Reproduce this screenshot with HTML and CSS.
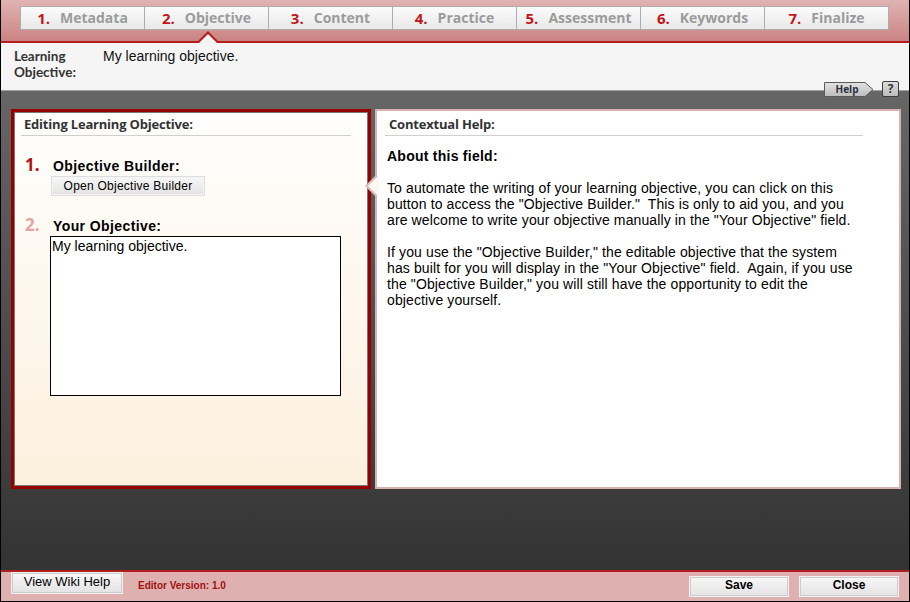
FILE: index.html
```html
<!DOCTYPE html>
<html>
<head>
<meta charset="utf-8">
<title>Objective Editor</title>
<link rel="stylesheet" href="styles.css">
</head>
<body>
<div class="app">
  <header class="topbar">
    <nav class="tabs">
      <div class="tab"><span class="tab-num">1.</span><span class="tab-lbl">Metadata</span></div>
      <div class="tab"><span class="tab-num">2.</span><span class="tab-lbl">Objective</span></div>
      <div class="tab"><span class="tab-num">3.</span><span class="tab-lbl">Content</span></div>
      <div class="tab"><span class="tab-num">4.</span><span class="tab-lbl">Practice</span></div>
      <div class="tab"><span class="tab-num">5.</span><span class="tab-lbl">Assessment</span></div>
      <div class="tab"><span class="tab-num">6.</span><span class="tab-lbl">Keywords</span></div>
      <div class="tab"><span class="tab-num">7.</span><span class="tab-lbl">Finalize</span></div>
    </nav>
  </header>
  <div class="caret caret-outer"></div>
  <div class="caret caret-inner"></div>

  <section class="objective-bar">
    <div class="ob-label">Learning<br>Objective:</div>
    <div class="ob-text">My learning objective.</div>
    <div class="help">
      <svg class="help-tab" width="50" height="15" viewBox="0 0 50 15">
        <defs>
          <linearGradient id="hg" x1="0" y1="0" x2="0" y2="1">
            <stop offset="0" stop-color="#e2e2e2"/>
            <stop offset="1" stop-color="#bcbcbc"/>
          </linearGradient>
        </defs>
        <polygon points="0.5,0.5 41,0.5 49,7.5 41,14.5 0.5,14.5" fill="url(#hg)" stroke="#5a5a5a"/>
        <text x="23" y="11" text-anchor="middle" class="help-txt">Help</text>
      </svg>
      <span class="help-q">?</span>
    </div>
  </section>

  <main class="workspace">
    <section class="panel-edit">
      <h2 class="panel-title edit-title">Editing Learning Objective:</h2>
      <div class="step step-1">
        <div class="step-head"><span class="step-num num-1">1.</span><span class="step-label">Objective Builder:</span></div>
        <button class="btn btn-builder">Open Objective Builder</button>
      </div>
      <div class="step step-2">
        <div class="step-head"><span class="step-num num-2">2.</span><span class="step-label">Your Objective:</span></div>
        <textarea class="objective-input">My learning objective.</textarea>
      </div>
    </section>

    <section class="panel-help">
      <div class="callout callout-outer"></div>
      <div class="callout callout-inner"></div>
      <h2 class="panel-title help-title">Contextual Help:</h2>
      <div class="help-body">
        <p class="help-head">About this field:</p>
        <p class="help-para">To automate the writing of your learning objective, you can click on this button to access the "Objective Builder."&nbsp; This is only to aid you, and you are welcome to write your objective manually in the "Your Objective" field.</p>
        <p class="help-para">If you use the "Objective Builder," the editable objective that the system has built for you will display in the "Your Objective" field.&nbsp; Again, if you use the "Objective Builder," you will still have the opportunity to edit the objective yourself.</p>
      </div>
    </section>
  </main>

  <footer class="footer">
    <button class="btn btn-wiki">View Wiki Help</button>
    <span class="version">Editor Version: 1.0</span>
    <div class="footer-actions">
      <button class="btn btn-action">Save</button>
      <button class="btn btn-action">Close</button>
    </div>
  </footer>
</div>
</body>
</html>
```

FILE: styles.css
```css
* {
  box-sizing: border-box;
}

body {
  margin: 0;
  width: 910px;
  height: 602px;
  overflow: hidden;
  background: #ffffff;
}

.app {
  position: relative;
  width: 910px;
  height: 602px;
  border: 1px solid #000;
  border-top: 0;
  display: flex;
  flex-direction: column;
  font-family: Arial, "Liberation Sans", sans-serif;
  color: #000;
}

/* ---------- top tab bar ---------- */
.topbar {
  height: 43px;
  flex: 0 0 43px;
  padding: 6px 0 0 19px;
  border-bottom: 2px solid #b41e1e;
  background: linear-gradient(#e0b3b3, #cc8383);
}

.tabs {
  display: flex;
}

.tab {
  width: 125px;
  height: 24px;
  margin-right: -1px;
  border: 1px solid #adadad;
  background: linear-gradient(#fbfbfb, #e9e9e9);
  display: flex;
  align-items: center;
  justify-content: center;
  gap: 10px;
  font-family: "Open Sans", "DejaVu Sans", sans-serif;
  font-weight: 700;
  font-size: 14px;
  line-height: 16px;
  padding-bottom: 1px;
}

.tab-num {
  color: #c3161c;
  font-size: 15px;
}

.tab-lbl {
  color: #9b9b9b;
}

.caret {
  position: absolute;
  left: 195px;
  width: 0;
  height: 0;
  border-left: 12px solid transparent;
  border-right: 12px solid transparent;
  border-bottom: 12px solid #b41e1e;
}

.caret-outer {
  top: 31px;
}

.caret-inner {
  top: 34px;
  border-bottom-color: #f5f5f5;
}

/* ---------- objective header ---------- */
.objective-bar {
  position: relative;
  height: 48px;
  flex: 0 0 48px;
  display: flex;
  padding: 5px 0 0 13px;
  background: #f5f5f5;
  border-bottom: 1px solid #a3a3a3;
}

.ob-label {
  width: 89px;
  font-family: Lato, "Open Sans", sans-serif;
  font-weight: 700;
  font-size: 13.5px;
  line-height: 16px;
  color: #333;
}

.ob-text {
  font-size: 14px;
  line-height: 16px;
  color: #111;
}

.help {
  position: absolute;
  left: 823px;
  top: 39px;
  display: flex;
  align-items: flex-start;
  gap: 8px;
}

.help-tab {
  display: block;
}

.help-txt {
  font-family: "Open Sans", "DejaVu Sans", sans-serif;
  font-weight: 700;
  font-size: 10px;
  fill: #2a3140;
}

.help-q {
  width: 17px;
  height: 16px;
  margin-top: -1px;
  border: 1px solid #3c3c3c;
  border-radius: 2px;
  background: linear-gradient(#dcdcdc, #bdbdbd);
  font-family: "Open Sans", "DejaVu Sans", sans-serif;
  font-weight: 700;
  font-size: 12px;
  line-height: 14px;
  text-align: center;
  color: #333;
}

/* ---------- workspace ---------- */
.workspace {
  flex: 1 1 auto;
  display: flex;
  align-items: flex-start;
  gap: 4px;
  padding: 18px 0 0 10px;
  background: linear-gradient(#666666, #333333);
}

.panel-title {
  margin: 0;
  padding: 2px 0 1px 3px;
  font-family: "Open Sans", "DejaVu Sans", sans-serif;
  font-weight: 700;
  font-size: 13px;
  letter-spacing: -0.2px;
  line-height: 19px;
  color: #333;
  border-bottom: 1px solid #cfcfcf;
}

.panel-edit {
  width: 360px;
  height: 380px;
  padding: 1px;
  border: 3px solid #980000;
  box-shadow: inset 0 0 0 1px #777;
  background: linear-gradient(#fffefd, #fbf0dd);
}

.edit-title {
  width: 330px;
  margin-left: 6px;
}

.step-1 {
  margin-top: 22px;
}

.step-2 {
  margin-top: 22px;
}

.step-head {
  display: flex;
  align-items: baseline;
  padding-left: 10px;
}

.step-num {
  width: 28px;
  font-family: "Open Sans", "DejaVu Sans", sans-serif;
  font-weight: 700;
  font-size: 17px;
  line-height: 13px;
}

.num-1 {
  color: #b3141b;
}

.num-2 {
  color: #e3a3a3;
}

.step-label {
  font-weight: 700;
  font-size: 14px;
  line-height: 16px;
  letter-spacing: 0.4px;
}

.btn {
  display: block;
  font-family: Arial, "Liberation Sans", sans-serif;
  color: #000;
  cursor: pointer;
  padding: 0;
  border: 1px solid #f1f1f1;
  background: linear-gradient(#f7f7f7, #e3e3e3);
  box-shadow: inset 0 0 0 1px #cdcdcd;
}

.btn-builder {
  width: 154px;
  height: 20px;
  margin: 2px 0 0 36px;
  border-color: #dedede;
  box-shadow: inset 0 0 0 1px #f4f4f4;
  font-size: 12px;
  line-height: 14px;
  letter-spacing: 0.25px;
  padding-bottom: 1px;
}

.objective-input {
  display: block;
  width: 291px;
  height: 160px;
  margin: 2px 0 0 35px;
  padding: 1px 1px;
  border: 1px solid #000;
  background: #fff;
  resize: none;
  font-family: Arial, "Liberation Sans", sans-serif;
  font-size: 14px;
  line-height: 16px;
  color: #000;
  overflow: hidden;
}

.panel-help {
  position: relative;
  width: 526px;
  height: 380px;
  border: 2px solid #d8b2b2;
  background: #fff;
}

.help-title {
  width: 478px;
  margin-left: 8px;
  padding-left: 4px;
  padding-top: 4px;
}

.callout {
  position: absolute;
  top: 64px;
  width: 0;
  height: 0;
  border-top: 11px solid transparent;
  border-bottom: 11px solid transparent;
  border-right: 11px solid #dcbaba;
}

.callout-outer {
  left: -12px;
}

.callout-inner {
  left: -9px;
  border-right-color: #fdf7f1;
}

.help-body {
  width: 472px;
  margin: 12px 0 0 10px;
  font-size: 14px;
  line-height: 16px;
  letter-spacing: 0.12px;
}

.help-body p {
  margin: 0;
}

.help-head {
  font-weight: 700;
  letter-spacing: 0.25px;
}

.help-para {
  margin-top: 16px !important;
}

/* ---------- footer ---------- */
.footer {
  flex: 0 0 31px;
  height: 31px;
  display: flex;
  align-items: flex-start;
  padding: 0 10px;
  border-top: 2px solid #b02020;
  background: #dfb0b0;
}

.btn-wiki {
  width: 112px;
  height: 22px;
  font-size: 13px;
  line-height: 15px;
  padding-bottom: 3px;
}

.version {
  margin: 8px 0 0 15px;
  font-weight: 700;
  font-size: 10px;
  line-height: 12px;
  color: #a01010;
}

.footer-actions {
  margin-left: auto;
  margin-top: 4px;
  display: flex;
  gap: 10px;
}

.btn-action {
  width: 100px;
  height: 21px;
  font-weight: 700;
  font-size: 12px;
  line-height: 14px;
  padding-bottom: 4px;
}
```
